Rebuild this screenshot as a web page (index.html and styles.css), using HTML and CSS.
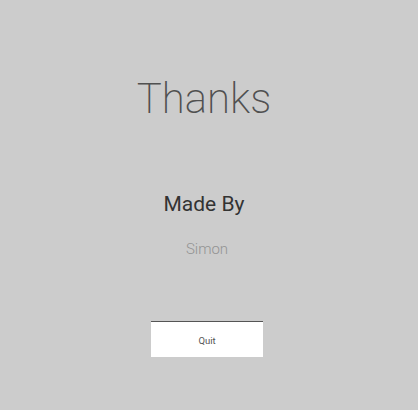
FILE: index.html
```html
<!DOCTYPE html>
<html>
<head>
<meta charset="utf-8">
<link rel="stylesheet" href="styles.css">
</head>
<body>
<main class="screen">
  <h1 class="title">Thanks</h1>
  <h2 class="made">Made By</h2>
  <p class="author">Simon</p>
  <button class="quit">Quit</button>
</main>
</body>
</html>
```

FILE: styles.css
```css
html, body {
  margin: 0;
  padding: 0;
  background: #cccccc;
}
.screen {
  width: 418px;
  height: 410px;
  display: flex;
  flex-direction: column;
  align-items: center;
  font-family: Roboto, "Liberation Sans", sans-serif;
}
.title {
  margin: 73px 10px 0 0;
  font-size: 42px;
  line-height: 52px;
  font-weight: 200;
  color: #505050;
}
.made {
  margin: 66px 10px 0 0;
  font-size: 21px;
  line-height: 26px;
  font-weight: 400;
  color: #333333;
}
.author {
  margin: 22px 4px 0 0;
  font-size: 15px;
  line-height: 20px;
  font-weight: 300;
  color: #939393;
}
.quit {
  margin: 62px 4px 0 0;
  width: 112px;
  height: 36px;
  background: #ffffff;
  border: none;
  border-top: 1px solid #555555;
  font-family: Roboto, "Liberation Sans", sans-serif;
  font-size: 9.5px;
  color: #555555;
  padding: 1px 0 0 0;
}
```
